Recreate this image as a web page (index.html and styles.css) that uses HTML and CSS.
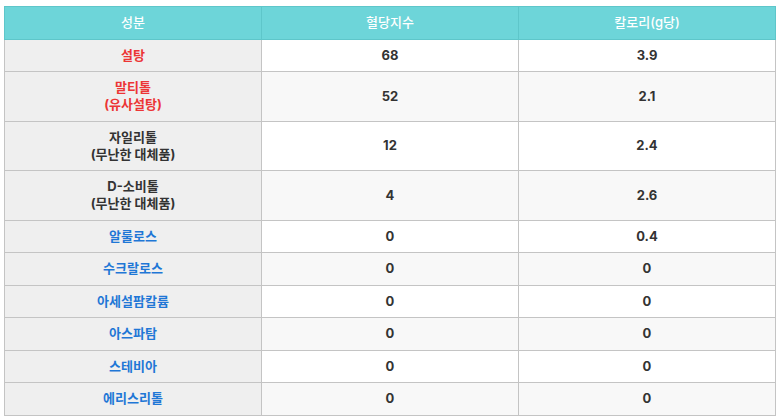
FILE: index.html
```html
<!DOCTYPE html>
<html lang="ko">
<head>
<meta charset="utf-8">
<link rel="stylesheet" href="styles.css">
</head>
<body>
<div class="wrap">
<table class="sweet">
  <thead>
    <tr><th>성분</th><th>혈당지수</th><th>칼로리(g당)</th></tr>
  </thead>
  <tbody>
    <tr><td class="name red">설탕</td><td>68</td><td>3.9</td></tr>
    <tr><td class="name red">말티톨<br>(유사설탕)</td><td>52</td><td>2.1</td></tr>
    <tr><td class="name">자일리톨<br>(무난한 대체품)</td><td>12</td><td>2.4</td></tr>
    <tr><td class="name">D-소비톨<br>(무난한 대체품)</td><td>4</td><td>2.6</td></tr>
    <tr><td class="name blue">알룰로스</td><td>0</td><td>0.4</td></tr>
    <tr><td class="name blue">수크랄로스</td><td>0</td><td>0</td></tr>
    <tr><td class="name blue">아세설팜칼륨</td><td>0</td><td>0</td></tr>
    <tr><td class="name blue">아스파탐</td><td>0</td><td>0</td></tr>
    <tr><td class="name blue">스테비아</td><td>0</td><td>0</td></tr>
    <tr><td class="name blue">에리스리톨</td><td>0</td><td>0</td></tr>
  </tbody>
</table>
</div>
</body>
</html>
```
FILE: styles.css
```css
html, body {
  margin: 0;
  padding: 0;
  background: #ffffff;
}
.wrap {
  padding: 6px 4px 0 4px;
}
.sweet {
  width: 772px;
  border-collapse: collapse;
  table-layout: fixed;
  font-family: "Inter", "Noto Sans CJK KR", sans-serif;
  font-size: 13px;
  line-height: 17px;
  color: #333333;
  border: 1px solid #c2c2c2;
}
.sweet th {
  background: #6dd5d9;
  color: #ffffff;
  font-weight: 500;
  padding: 7.25px 8px;
  border: 1px solid #5ec6ca;
  text-align: center;
}
.sweet th + th {
  border-left-color: #58bfc3;
}
.sweet td {
  padding: 7.25px 8px;
  border: 1px solid #c4c4c4;
  text-align: center;
  font-weight: 700;
  background: #ffffff;
}
.sweet tbody tr:nth-child(even) td {
  background: #f8f8f8;
}
.sweet td.name,
.sweet tbody tr:nth-child(even) td.name {
  background: #efefef;
}
.red { color: #ec3535; }
.blue { color: #1f77d6; }
```
